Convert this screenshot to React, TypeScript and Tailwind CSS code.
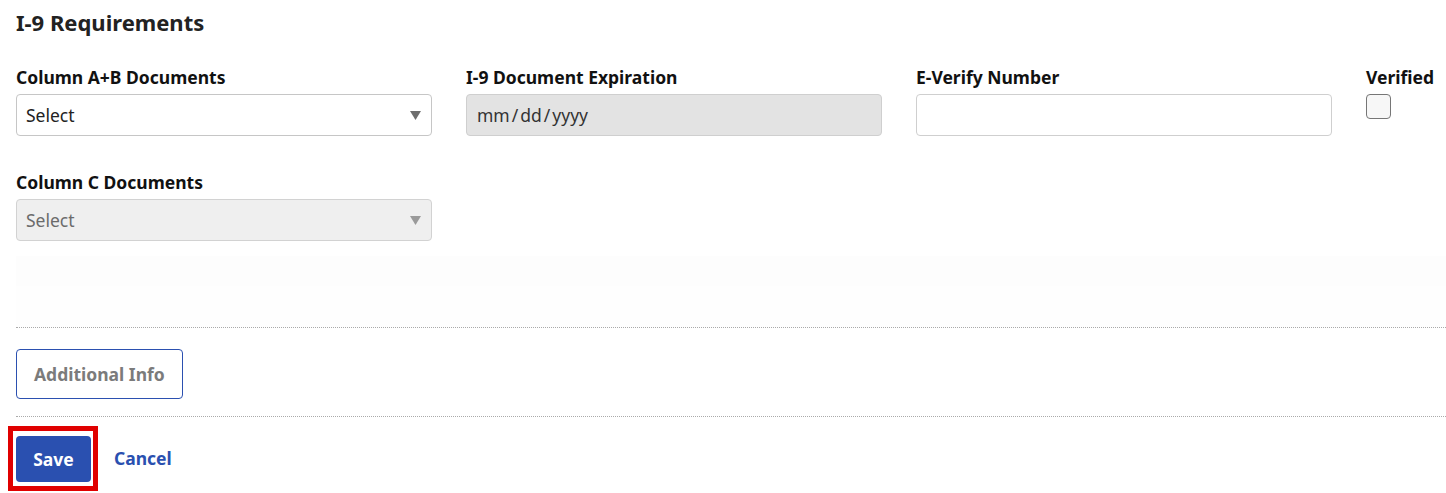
const font = { fontFamily: '"Noto Sans", "Open Sans", sans-serif' };

function Caret({ muted }: { muted?: boolean }) {
  return (
    <svg width="11" height="9" viewBox="0 0 11 9" className="shrink-0">
      <path d="M0 0 L11 0 L5.5 9 Z" fill={muted ? "#9a9a9a" : "#6e6e6e"} />
    </svg>
  );
}

function Field({ label, children }: { label: string; children: React.ReactNode }) {
  return (
    <div className="flex w-[416px] flex-col">
      <label className="h-[24px] text-[17.5px] font-bold leading-[24px] text-[#111]">{label}</label>
      <div className="mt-[5px]">{children}</div>
    </div>
  );
}

export default function App() {
  return (
    <div className="min-h-[493px] w-[1446px] bg-white pl-4" style={font}>
      <h2 className="pt-[9px] text-[22px] font-bold leading-[26px] text-[#222]">I-9 Requirements</h2>

      <div className="mt-[30px] flex gap-[34px]">
        <Field label="Column A+B Documents">
          <div className="flex h-[42px] items-center justify-between rounded-[4px] border border-[#c6c6c6] bg-white pl-[9px] pr-[10px] text-[17.5px] text-[#222]">
            <span>Select</span>
            <Caret />
          </div>
        </Field>
        <Field label="I-9 Document Expiration">
          <div className="flex h-[42px] items-center rounded-[4px] border border-[#cfcfcf] bg-[#e3e3e3] pl-[10px] text-[17.5px] text-[#333]">
            mm<span className="px-[2px]">/</span>dd<span className="px-[2px]">/</span>yyyy
          </div>
        </Field>
        <Field label="E-Verify Number">
          <div className="h-[42px] rounded-[4px] border border-[#cfcfcf] bg-white" />
        </Field>
        <div className="flex flex-col">
          <label className="h-[24px] text-[17.5px] font-bold leading-[24px] text-[#111]">Verified</label>
          <div className="mt-[5px] h-[25px] w-[25px] rounded-[4px] border border-[#767676] bg-[#f7f7f7]" />
        </div>
      </div>

      <div className="mt-[34px]">
        <Field label="Column C Documents">
          <div className="flex h-[42px] items-center justify-between rounded-[4px] border border-[#d2d2d2] bg-[#efefef] pl-[9px] pr-[10px] text-[17.5px] text-[#6b6b6b]">
            <span>Select</span>
            <Caret muted />
          </div>
        </Field>
      </div>

      <div className="mt-[15px] h-[30px] bg-[#fdfdfd]" />
      <div className="h-[42px] border-b border-dotted border-[#aaa] bg-[#fefefe]" />

      <div className="py-[21px]">
        <button className="h-[50px] rounded-[4px] border border-[#2b50b0] bg-white px-[17px] text-[17.5px] font-bold text-[#7b7b7b]">
          Additional Info
        </button>
      </div>

      <div className="-mt-[4px] border-t border-dotted border-[#aaa]" />

      <div className="mt-[9px] flex items-center">
        <div className="-ml-[8px] border-[5px] border-[#e00000] pb-[4px] pl-[3px] pr-[2px] pt-[5px]">
          <button className="h-[46px] w-[75px] rounded-[4px] bg-[#2a50b0] text-[17.5px] font-bold text-white">
            Save
          </button>
        </div>
        <button className="ml-[16px] text-[17.5px] font-bold text-[#2a50b0]">Cancel</button>
      </div>
    </div>
  );
}
